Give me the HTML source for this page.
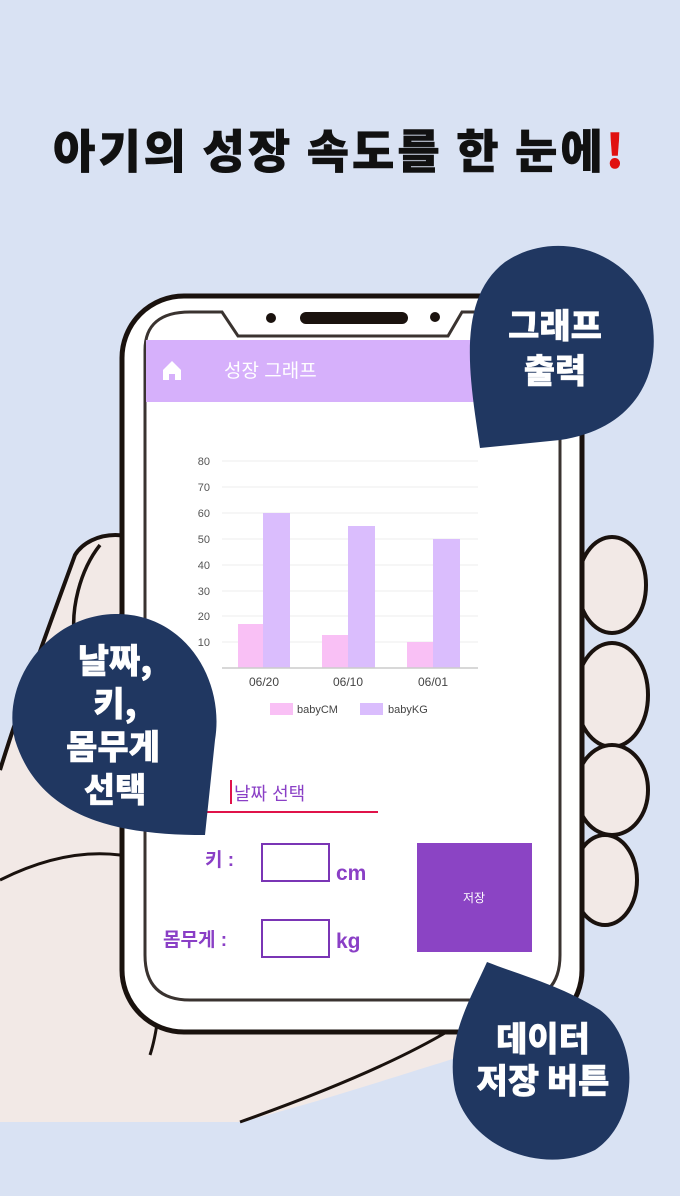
<!DOCTYPE html>
<html><head><meta charset="utf-8"><style>
html,body{margin:0;padding:0;}
body{width:680px;height:1196px;background:#d9e2f3;overflow:hidden;position:relative;font-family:"Liberation Sans","Noto Sans CJK KR",sans-serif;}
svg{position:absolute;left:0;top:0;}
</style></head><body>
<svg width="680" height="1196" viewBox="0 0 680 1196" xmlns="http://www.w3.org/2000/svg" font-family="Liberation Sans, Noto Sans CJK KR, sans-serif">
<rect width="680" height="1196" fill="#d9e2f3"/>
<text x="340" y="168" text-anchor="middle" font-size="46" font-weight="900" fill="#111" font-family="Noto Sans CJK KR, sans-serif" letter-spacing="3" stroke="#111" stroke-width="0.6">아기의 성장 속도를 한 눈에<tspan fill="#e01010" stroke="#e01010">!</tspan></text>

<!-- skin -->
<path d="M0,770 C25,690 55,610 75,555 C90,530 140,525 160,560 L560,560 L560,1030 C500,1040 350,1095 240,1122 L0,1122 Z" fill="#f2e9e6"/>
<path d="M0,770 C25,690 55,610 75,555 C90,530 140,525 158,560" fill="none" stroke="#1a120e" stroke-width="4"/>
<path d="M100,545 C80,570 70,610 75,640 C100,640 120,620 130,600" fill="none" stroke="#1a120e" stroke-width="3.5"/>
<path d="M0,880 C40,860 80,850 120,855" fill="none" stroke="#1a120e" stroke-width="3"/>
<path d="M160,1000 C158,1020 155,1040 150,1055" fill="none" stroke="#1a120e" stroke-width="3"/>
<path d="M240,1122 C330,1090 400,1060 450,1030" fill="none" stroke="#1a120e" stroke-width="3"/>
<!-- right fingers -->
<g fill="#f2e9e6" stroke="#1a120e" stroke-width="4">
<ellipse cx="612" cy="585" rx="34" ry="48"/>
<ellipse cx="612" cy="695" rx="36" ry="52"/>
<ellipse cx="612" cy="790" rx="36" ry="45"/>
<ellipse cx="605" cy="880" rx="32" ry="45"/>
</g>

<!-- phone -->
<rect x="122" y="296" width="460" height="736" rx="62" fill="#fff" stroke="#1a120e" stroke-width="5"/>
<path d="M145,350 C145,325 160,312 190,312 L222,312 L238,336 L448,336 L462,312 L520,312 C545,312 560,330 560,355 L560,955 C560,985 545,1000 515,1000 L190,1000 C160,1000 145,985 145,955 Z" fill="#fff" stroke="#3a3330" stroke-width="3"/>
<rect x="300" y="312" width="108" height="12" rx="6" fill="#1a120e"/>
<circle cx="271" cy="318" r="5" fill="#1a120e"/>
<circle cx="435" cy="317" r="5" fill="#1a120e"/>
<rect x="146" y="340" width="412" height="62" fill="#d6b0fb"/>
<path d="M163,380 L163,370 L172,361 L181,370 L181,380 L175,380 L175,374 L169,374 L169,380 Z" fill="#fff"/>
<text x="224" y="377" font-size="19" fill="#fff">성장 그래프</text>

<!-- chart -->
<g stroke="#eee" stroke-width="1">
<line x1="222" y1="461" x2="478" y2="461"/><line x1="222" y1="487" x2="478" y2="487"/>
<line x1="222" y1="513" x2="478" y2="513"/><line x1="222" y1="539" x2="478" y2="539"/>
<line x1="222" y1="565" x2="478" y2="565"/><line x1="222" y1="591" x2="478" y2="591"/>
<line x1="222" y1="616" x2="478" y2="616"/><line x1="222" y1="642" x2="478" y2="642"/>
</g>
<g font-size="11" fill="#555" text-anchor="end">
<text x="210" y="465">80</text><text x="210" y="491">70</text><text x="210" y="517">60</text>
<text x="210" y="543">50</text><text x="210" y="569">40</text><text x="210" y="595">30</text>
<text x="210" y="620">20</text><text x="210" y="646">10</text>
</g>
<rect x="238" y="624" width="25" height="44" fill="#f9c0f5"/>
<rect x="263" y="513" width="27" height="155" fill="#dabdfd"/>
<rect x="322" y="635" width="26" height="33" fill="#f9c0f5"/>
<rect x="348" y="526" width="27" height="142" fill="#dabdfd"/>
<rect x="407" y="642" width="26" height="26" fill="#f9c0f5"/>
<rect x="433" y="539" width="27" height="129" fill="#dabdfd"/>
<line x1="222" y1="668" x2="478" y2="668" stroke="#ccc" stroke-width="1.5"/>
<g font-size="12" fill="#444" text-anchor="middle">
<text x="264" y="686">06/20</text><text x="348" y="686">06/10</text><text x="433" y="686">06/01</text>
</g>
<rect x="270" y="703" width="23" height="12" fill="#f9c0f5"/>
<text x="297" y="713" font-size="11" fill="#444">babyCM</text>
<rect x="360" y="703" width="23" height="12" fill="#dabdfd"/>
<text x="388" y="713" font-size="11" fill="#444">babyKG</text>

<!-- form -->
<rect x="230" y="780" width="2" height="24" fill="#e0134a"/>
<text x="234" y="800" font-size="18" fill="#8a3fc6">날짜 선택</text>
<line x1="205" y1="812" x2="378" y2="812" stroke="#e0134a" stroke-width="2"/>
<text x="205" y="866" font-size="19" font-weight="bold" fill="#8a3fc6">키 :</text>
<rect x="262" y="844" width="67" height="37" fill="#fff" stroke="#7a35b5" stroke-width="2"/>
<text x="336" y="880" font-size="21" font-weight="bold" fill="#8a3fc6">cm</text>
<text x="163" y="946" font-size="19" font-weight="bold" fill="#8a3fc6">몸무게 :</text>
<rect x="262" y="920" width="67" height="37" fill="#fff" stroke="#7a35b5" stroke-width="2"/>
<text x="336" y="948" font-size="21" font-weight="bold" fill="#8a3fc6">kg</text>
<rect x="417" y="843" width="115" height="109" fill="#8b44c4"/>
<text x="474" y="902" font-size="12" fill="#fff" text-anchor="middle">저장</text>

<!-- bubbles -->
<g fill="#203761">
<path d="M480,448 C470,380 455,300 505,262 C560,225 640,255 652,320 C662,380 630,430 560,440 Z"/>
<path d="M205,835 C120,835 40,820 15,740 C0,680 50,615 115,614 C185,613 225,680 215,740 Z"/>
<path d="M487,962 C520,975 560,985 600,1010 C640,1040 640,1120 595,1150 C545,1175 470,1150 455,1090 C445,1040 470,1000 487,962 Z"/>
</g>
<g fill="#fff" stroke="#fff" stroke-width="0.5" font-size="34" font-weight="900" text-anchor="middle" font-family="Noto Sans CJK KR, sans-serif">
<text x="555" y="338">그래프</text>
<text x="555" y="383">출력</text>
<text x="115" y="673">날짜,</text>
<text x="115" y="716">키,</text>
<text x="113" y="759">몸무게</text>
<text x="115" y="802">선택</text>
<text x="543" y="1051">데이터</text>
<text x="543" y="1093">저장 버튼</text>
</g>
</svg>
</body></html>
